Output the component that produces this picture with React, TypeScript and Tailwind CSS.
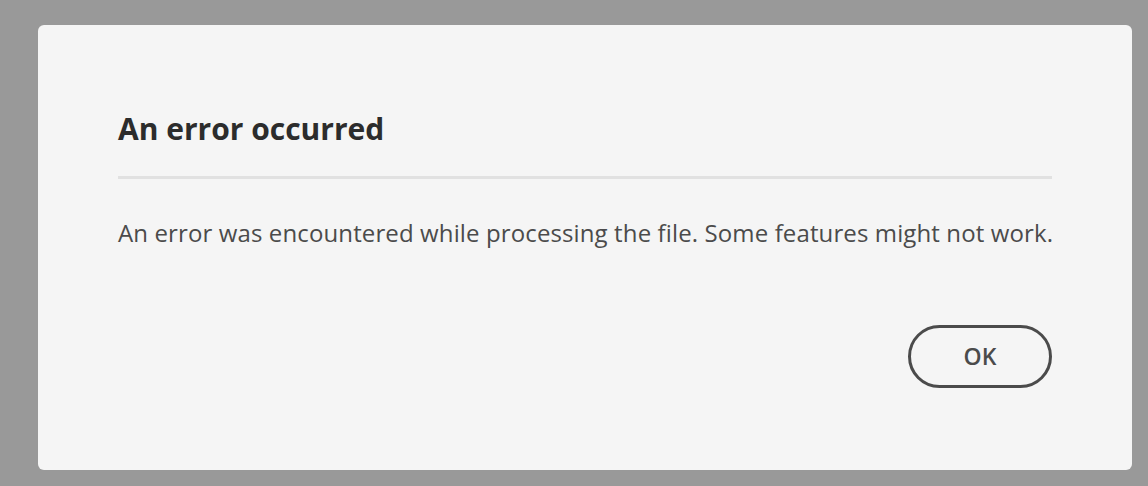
export default function App() {
  return (
    <div className="h-[486px] w-[1148px] bg-[#999999] pl-[38px] pr-[16px] pt-[25px] font-['Open_Sans',sans-serif]">
      <div className="flex h-[445px] w-[1094px] flex-col rounded-[6px] bg-[#f5f5f5] px-[80px] pt-[80px]">
        <h2 className="text-[30px] font-bold leading-[48px] text-[#2c2c2c]">An error occurred</h2>
        <div className="mt-[23px] h-[3px] w-full bg-[#e1e1e1]" />
        <p className="mt-[38px] whitespace-nowrap text-[24px] leading-[32px] tracking-[0.12px] text-[#4b4b4b]">
          An error was encountered while processing the file. Some features might not work.
        </p>
        <div className="mt-[76px] flex justify-end">
          <button className="flex h-[63px] w-[144px] items-center justify-center rounded-full border-[3px] border-[#4b4b4b] text-[23px] font-semibold text-[#4b4b4b]">
            OK
          </button>
        </div>
      </div>
    </div>
  );
}
